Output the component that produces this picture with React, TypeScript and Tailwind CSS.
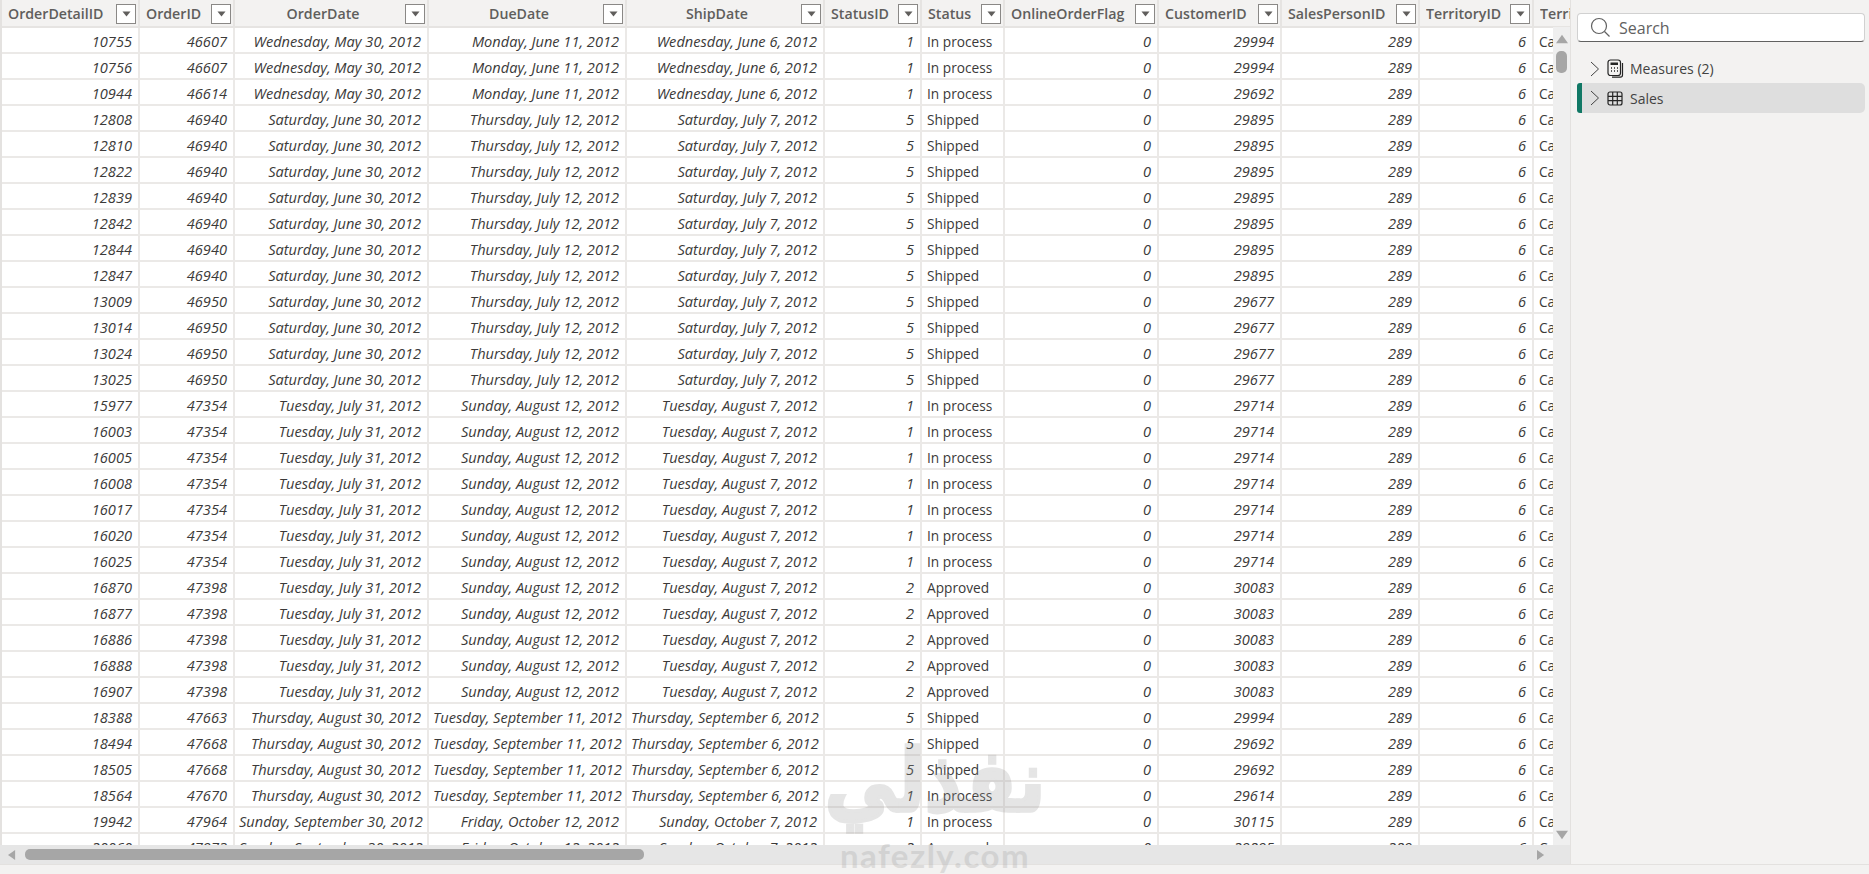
const columns = [
  { name: "OrderDetailID", width: "w-[137px]", align: "text-right", head: "text-left" },
  { name: "OrderID", width: "w-[95px]", align: "text-right", head: "text-left" },
  { name: "OrderDate", width: "w-[194px]", align: "text-right", head: "text-center" },
  { name: "DueDate", width: "w-[198px]", align: "text-right", head: "text-center" },
  { name: "ShipDate", width: "w-[198px]", align: "text-right", head: "text-center" },
  { name: "StatusID", width: "w-[97px]", align: "text-right", head: "text-left" },
  { name: "Status", width: "w-[83px]", align: "text-left", head: "text-left" },
  { name: "OnlineOrderFlag", width: "w-[154px]", align: "text-right", head: "text-left" },
  { name: "CustomerID", width: "w-[123px]", align: "text-right", head: "text-left" },
  { name: "SalesPersonID", width: "w-[138px]", align: "text-right", head: "text-left" },
  { name: "TerritoryID", width: "w-[114px]", align: "text-right", head: "text-left" },
  { name: "TerritoryName", width: "w-[200px]", align: "text-left", head: "text-left" },
];

const A = ["Wednesday, May 30, 2012", "Monday, June 11, 2012", "Wednesday, June 6, 2012"];
const B = ["Saturday, June 30, 2012", "Thursday, July 12, 2012", "Saturday, July 7, 2012"];
const C = ["Tuesday, July 31, 2012", "Sunday, August 12, 2012", "Tuesday, August 7, 2012"];
const D = ["Thursday, August 30, 2012", "Tuesday, September 11, 2012", "Thursday, September 6, 2012"];
const E = ["Sunday, September 30, 2012", "Friday, October 12, 2012", "Sunday, October 7, 2012"];

const statusNames: Record<number, string> = { 1: "In process", 2: "Approved", 5: "Shipped" };

const source: [string, string, string[], number, string][] = [
  ["10755", "46607", A, 1, "29994"],
  ["10756", "46607", A, 1, "29994"],
  ["10944", "46614", A, 1, "29692"],
  ["12808", "46940", B, 5, "29895"],
  ["12810", "46940", B, 5, "29895"],
  ["12822", "46940", B, 5, "29895"],
  ["12839", "46940", B, 5, "29895"],
  ["12842", "46940", B, 5, "29895"],
  ["12844", "46940", B, 5, "29895"],
  ["12847", "46940", B, 5, "29895"],
  ["13009", "46950", B, 5, "29677"],
  ["13014", "46950", B, 5, "29677"],
  ["13024", "46950", B, 5, "29677"],
  ["13025", "46950", B, 5, "29677"],
  ["15977", "47354", C, 1, "29714"],
  ["16003", "47354", C, 1, "29714"],
  ["16005", "47354", C, 1, "29714"],
  ["16008", "47354", C, 1, "29714"],
  ["16017", "47354", C, 1, "29714"],
  ["16020", "47354", C, 1, "29714"],
  ["16025", "47354", C, 1, "29714"],
  ["16870", "47398", C, 2, "30083"],
  ["16877", "47398", C, 2, "30083"],
  ["16886", "47398", C, 2, "30083"],
  ["16888", "47398", C, 2, "30083"],
  ["16907", "47398", C, 2, "30083"],
  ["18388", "47663", D, 5, "29994"],
  ["18494", "47668", D, 5, "29692"],
  ["18505", "47668", D, 5, "29692"],
  ["18564", "47670", D, 1, "29614"],
  ["19942", "47964", E, 1, "30115"],
  ["20060", "47973", E, 2, "29895"],
];

function FilterButton() {
  return (
    <span className="flex h-5 w-5 shrink-0 items-center justify-center border border-[#8a8886] bg-white">
      <svg width="9" height="6" viewBox="0 0 9 6">
        <path d="M0.5 0.5h8L4.5 5.5z" fill="#605e5c" />
      </svg>
    </span>
  );
}

function Triangle({ points, className }: { points: string; className: string }) {
  return (
    <svg viewBox="0 0 14 14" className={className}>
      <polygon points={points} fill="#a6a6a6" />
    </svg>
  );
}

export default function App() {
  return (
    <div className="relative flex h-[874px] w-[1869px] flex-col overflow-hidden bg-[#f3f2f1] font-['Open_Sans',sans-serif] text-[#252423]">
      <div className="flex h-[865px] border-b border-[#e3e1df]">
        <div className="flex w-[1570px] flex-col">
          <div className="relative h-[846px] overflow-hidden border-l-2 border-[#e4e2e0] bg-white">
            <table className="w-[1731px] table-fixed border-collapse">
              <colgroup>
                {columns.map((c) => (
                  <col key={c.name} className={c.width} />
                ))}
              </colgroup>
              <thead>
                <tr className="h-[27px] bg-[#f3f2f1]">
                  {columns.map((c) => (
                    <th
                      key={c.name}
                      className="border-r-2 border-b-2 border-[#e6e4e2] p-0 align-middle font-semibold"
                    >
                      <div className="flex h-[25px] items-center pt-[1px] pr-[2px] pl-[6px]">
                        <span className={`min-w-0 flex-1 overflow-hidden whitespace-nowrap text-[14.2px] leading-[24px] text-[#605e5c] ${c.head}`}>
                          {c.name}
                        </span>
                        {c.name !== "TerritoryName" && <FilterButton />}
                      </div>
                    </th>
                  ))}
                </tr>
              </thead>
              <tbody>
                {source.map((r) => {
                  const cells = [r[0], r[1], r[2][0], r[2][1], r[2][2], String(r[3]), statusNames[r[3]], "0", r[4], "289", "6", "California"];
                  return (
                    <tr key={r[0]} className="h-[26px]">
                      {cells.map((v, i) => (
                        <td
                          key={columns[i].name}
                          className={`overflow-hidden whitespace-nowrap border-r-2 border-b-2 border-[#ebe9e7] pb-0 text-[#3b3a39] ${columns[i].align === "text-right" ? "pt-[2px] pr-[6px] pl-[4px] text-right text-[14.6px] leading-[22px] italic" : "pt-[4px] pr-[5px] pl-[5px] text-left text-[13.7px] leading-[20px]"}`}
                        >
                          {v}
                        </td>
                      ))}
                    </tr>
                  );
                })}
              </tbody>
            </table>
            <div className="absolute top-[27px] right-0 bottom-0 flex w-[17px] flex-col items-center justify-between bg-[#efefef] pt-[6px] pb-[4px]">
              <div className="flex flex-col items-center gap-[6px]">
                <Triangle points="7,2 14,12 0,12" className="h-[12px] w-[14px]" />
                <div className="h-[22px] w-[11px] rounded-[5px] bg-[#a6a6a6]" />
              </div>
              <Triangle points="0,2 14,2 7,12" className="h-[12px] w-[14px]" />
            </div>
          </div>
          <div className="flex h-[19px] items-center bg-[#e6e6e6] pr-[23px] pl-[8px]">
            <Triangle points="10,0 10,14 0,7" className="h-[12px] w-[10px]" />
            <div className="ml-[7px] h-[11px] w-[619px] rounded-[5px] bg-[#a6a6a6]" />
            <div className="flex-1" />
            <Triangle points="0,0 10,7 0,14" className="h-[12px] w-[10px]" />
          </div>
        </div>
        <aside className="flex-1 border-l border-[#e3e1df] pt-[13px] pr-[4px] pl-[6px]">
          <div className="flex h-[29px] items-center rounded-[4px] border border-[#d1d1d1] border-b-[#616161] bg-white pl-[12px]">
            <svg width="21" height="21" viewBox="0 0 21 21" fill="none" stroke="#616161" strokeWidth="1.2">
              <circle cx="9" cy="9" r="7.5" />
              <path d="M14.5 14.5L19.5 19.5" />
            </svg>
            <span className="mt-[1px] ml-[8px] text-[16px] text-[#616161]">Search</span>
          </div>
          <div className="mt-[12px] flex h-[29px] items-center pl-[13px] text-[14px] text-[#424242]">
            <svg width="10" height="16" viewBox="0 0 10 16" fill="none" stroke="#424242" strokeWidth="1">
              <path d="M1 1l7.5 7-7.5 7" />
            </svg>
            <svg className="ml-[7px]" width="17" height="19" viewBox="0 0 17 19" fill="none" stroke="#242424" strokeWidth="1.2">
              <rect x="1" y="1" width="12.5" height="15.5" rx="2.5" />
              <rect x="3.5" y="3.5" width="7.5" height="2.5" fill="#242424" stroke="none" />
              <path d="M4 9h1M7 9h1M10 9h1M4 12h1M7 12h1M10 12h1" strokeWidth="1.6" />
              <path d="M15.5 4v12a2.2 2.2 0 0 1-2.2 2.2H5" />
            </svg>
            <span className="ml-[6px]">Measures (2)</span>
          </div>
          <div className="relative flex h-[30px] items-center rounded-[5px] bg-[#dedede] pl-[13px] text-[14px] text-[#424242]">
            <div className="absolute top-0 bottom-0 left-0 w-[5px] rounded-l-[3px] bg-[#117865]" />
            <svg width="10" height="16" viewBox="0 0 10 16" fill="none" stroke="#424242" strokeWidth="1">
              <path d="M1 1l7.5 7-7.5 7" />
            </svg>
            <svg className="ml-[7px]" width="16" height="15" viewBox="0 0 16 15" fill="none" stroke="#242424" strokeWidth="1.2">
              <rect x="1" y="1" width="14" height="13" rx="2" />
              <path d="M1 5.3h14M1 9.7h14M5.7 1v13M10.3 1v13" />
            </svg>
            <span className="ml-[7px]">Sales</span>
          </div>
        </aside>
      </div>
      <div className="pointer-events-none absolute top-[744px] left-[825px] flex w-[220px] flex-col items-center">
        <span
          className="origin-bottom scale-y-[1.2] font-['DejaVu_Sans',sans-serif] text-[72px] leading-[92px] font-bold text-[#999999] opacity-25 [-webkit-text-stroke:3px_#999999]"
          dir="rtl"
        >
          نفذلي
        </span>
        <span className="mt-[4px] font-['Lato',sans-serif] text-[33px] leading-[30px] font-bold tracking-[1.5px] text-[#999999] opacity-25">
          nafezly.com
        </span>
      </div>
    </div>
  );
}
